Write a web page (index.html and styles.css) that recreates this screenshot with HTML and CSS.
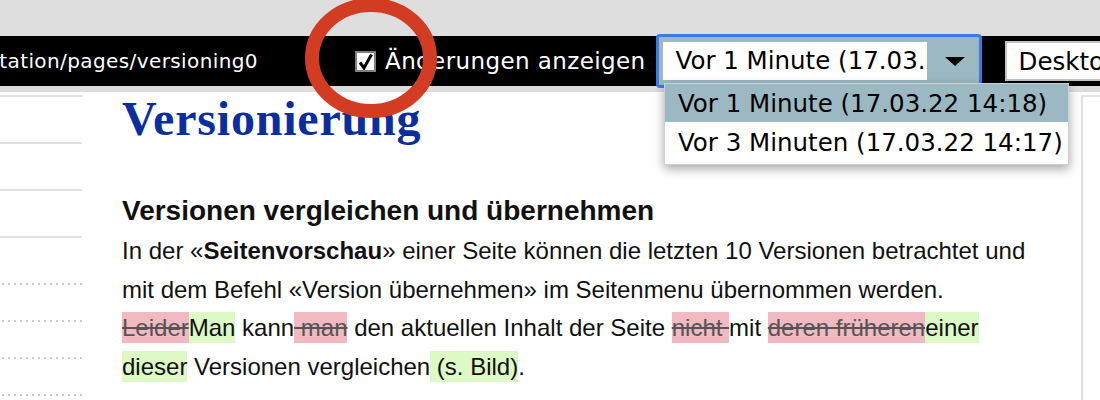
FILE: index.html
```html
<!doctype html>
<html lang="de">
<head>
    <meta charset="utf-8">
    <title>Versionierung</title>
    <link rel="stylesheet" href="styles.css">
</head>
<body>
    <div class="chrome"></div>

    <div class="toolbar">
        <div class="path"><span>/documentation/pages/versioning0</span></div>
        <label class="toggle">
            <span class="check"><svg width="17" height="17" viewBox="0 0 17 17"><path d="M3 9.5 L7 15 L14.5 1.5" fill="none" stroke="#000" stroke-width="3"/></svg></span>
            Änderungen anzeigen
        </label>
        <div class="select">
            <span class="select-value">Vor 1 Minute (17.03.22 14:18)</span>
            <span class="select-arrow"></span>
        </div>
        <div class="device">Desktop</div>
    </div>

    <div class="page">
        <nav class="nav">
            <div class="nav-item"></div>
            <div class="nav-item"></div>
            <div class="nav-item"></div>
            <div class="nav-item"></div>
            <div class="nav-sub"></div>
            <div class="nav-sub"></div>
            <div class="nav-sub"></div>
            <div class="nav-sub"></div>
        </nav>

        <main class="content">
            <h1>Versionierung</h1>
            <h2>Versionen vergleichen und übernehmen</h2>
            <p>In der «<b>Seitenvorschau</b>» einer Seite können die letzten 10 Versionen betrachtet und
            mit dem Befehl «Version übernehmen» im Seitenmenu übernommen werden.<br><del>Leider</del><ins>Man</ins> kann<del> man</del> den aktuellen Inhalt der Seite <del>nicht </del>mit <del>deren früheren</del><ins>einer dieser</ins> Versionen vergleichen<ins> (s. Bild)</ins>.</p>
        </main>

        <aside class="preview"></aside>
    </div>

    <ul class="dropdown">
        <li class="selected">Vor 1 Minute (17.03.22 14:18)</li>
        <li>Vor 3 Minuten (17.03.22 14:17)</li>
    </ul>

    <svg class="marker" width="140" height="130" viewBox="0 0 140 130">
        <ellipse cx="70" cy="62" rx="59" ry="53" fill="none" stroke="#d23c22" stroke-width="14"/>
    </svg>
</body>
</html>
```

FILE: styles.css
```css
body {
    margin: 0;
    overflow: hidden;
    font-family: "Liberation Sans", Arial, sans-serif;
    background: #fff;
}

.chrome { height: 36px; background: #dedede; }

.toolbar {
    display: flex;
    align-items: center;
    height: 50px;
    background: #000;
    color: #fff;
    font-family: "DejaVu Sans", sans-serif;
    font-size: 23px;
    letter-spacing: 0.4px;
    white-space: nowrap;
}
.path {
    width: 258px;
    flex-shrink: 0;
    display: flex;
    justify-content: flex-end;
    overflow: hidden;
    font-size: 20px;
}
.path span { flex-shrink: 0; }

.toggle {
    display: flex;
    align-items: center;
    margin-left: 97px;
    flex-shrink: 0;
}
.check {
    display: flex;
    align-items: center;
    justify-content: center;
    width: 21px; height: 21px;
    box-sizing: border-box;
    background: #fff;
    border: 2px solid #808080;
    margin-right: 9px;
}

.select {
    display: flex;
    align-items: center;
    flex-shrink: 0;
    width: 326px; height: 54px;
    box-sizing: border-box;
    margin-left: 10px;
    padding: 0 4px;
    border: 3px solid #3b7be9;
    border-radius: 4px;
    background: #9cb9c3;
    color: #000;
    letter-spacing: 0;
    font-size: 24.5px;
}
.select-value {
    width: 251px;
    height: 38px;
    line-height: 38px;
    padding-left: 13px;
    overflow: hidden;
    background: #fff;
}
.select-arrow {
    margin-left: 18px;
    width: 0; height: 0;
    border-left: 10px solid transparent;
    border-right: 10px solid transparent;
    border-top: 9px solid #000;
}

.device {
    flex-shrink: 0;
    margin-left: 23px;
    height: 40px;
    line-height: 38px;
    box-sizing: border-box;
    padding: 0 30px 0 12px;
    background: #fff;
    border: 2px solid #c4c4c4;
    color: #000;
    font-size: 24.5px;
    letter-spacing: 0;
}

.page {
    display: flex;
    border-top: 6px solid #dcdcdc;
    height: 308px;
    overflow: hidden;
}

.nav { width: 82px; flex-shrink: 0; padding-top: 3px; }
.nav-item {
    height: 47px;
    box-sizing: border-box;
    border-top: 2px solid #dde0e4;
}
.nav-sub {
    height: 37px;
    background-image: linear-gradient(to right, #cacaca 2px, transparent 2px);
    background-size: 6px 2px;
    background-position: 2px 0;
    background-repeat: repeat-x;
}

.content { flex: 1; padding-left: 40px; color: #111; }
.content h1 {
    margin: 3px 0 0;
    font-family: "Liberation Serif", "Times New Roman", serif;
    font-size: 48px;
    line-height: 48px;
    letter-spacing: 0.8px;
    color: #0b2e9e;
}
.content h2 {
    margin: 51px 0 0;
    font-size: 28px;
    line-height: 34px;
}
.content p {
    margin: 4px 0 0;
    max-width: 915px;
    font-size: 24px;
    line-height: 38.5px;
}
del, ins { padding: 2px 0; text-decoration: none; }
del { background: #f1b9c1; color: #555; text-decoration: line-through; }
ins { background: #dcf9c6; }

.preview {
    width: 17px;
    flex-shrink: 0;
    margin-top: 3px;
    border-left: 2px solid #dfdfe3;
    border-top: 2px solid #e6e6e6;
}

.dropdown {
    position: absolute;
    left: 664px; top: 83px;
    width: 403px;
    margin: 0; padding: 0;
    list-style: none;
    background: #fff;
    border: 1px solid #cfcfcf;
    box-shadow: 0 4px 10px rgba(0, 0, 0, 0.35);
    font-family: "DejaVu Sans", sans-serif;
    font-size: 24.5px;
    white-space: nowrap;
}
.dropdown li { height: 42px; line-height: 42px; padding-left: 13px; }
.dropdown li.selected { height: 38px; line-height: 40px; background: #9cb9c3; }

.marker {
    position: absolute;
    left: 301px; top: -4px;
}
```
